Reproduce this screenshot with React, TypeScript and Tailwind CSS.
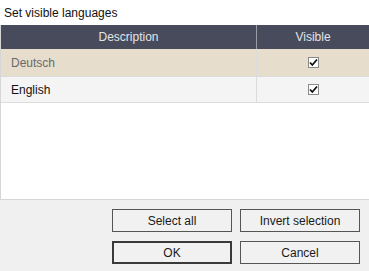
import React from 'react';

const Check: React.FC = () => (
  <div className="w-[11px] h-[11px] border border-[#8a8a8a] bg-white flex items-center justify-center">
    <svg width="9" height="9" viewBox="0 0 9 9">
      <path d="M1 4.5 L3.3 7 L8 1.5" fill="none" stroke="#111" strokeWidth="1.8" />
    </svg>
  </div>
);

const Btn: React.FC<{ label: string; primary?: boolean }> = ({ label, primary }) => (
  <button
    className={
      'w-[120px] h-[23px] bg-[#f1f1f1] text-[12px] text-[#1a1a1a] flex items-center justify-center ' +
      (primary ? 'border-2 border-[#3a3a3a]' : 'border border-[#555555]')
    }
  >
    {label}
  </button>
);

const App: React.FC = () => {
  const rows = [
    { name: 'Deutsch', bg: 'bg-[#e6ddcd]', text: 'text-[#6a6a6a]', h: 'h-[28px]' },
    { name: 'English', bg: 'bg-[#f4f4f4]', text: 'text-[#111]', h: 'h-[26px]' },
  ];

  return (
    <div className="w-[369px] h-[271px] bg-white flex flex-col font-['Liberation_Sans',Arial,sans-serif] text-[12px]">
      <div className="h-[25px] pl-[4px] pt-[4px] text-[#111]">Set visible languages</div>

      <div className="h-[175px] flex flex-col border-l border-b border-[#d6d6d6] bg-white">
        <div className="h-[24px] flex bg-[#474b5b] text-[#e4e4e8]">
          <div className="w-[256px] flex items-center justify-center border-r border-[#9a9ca6]">Description</div>
          <div className="flex-1 flex items-center justify-center">Visible</div>
        </div>
        {rows.map((r) => (
          <div key={r.name} className={`${r.h} flex border-b border-[#dcdcdc] ${r.bg}`}>
            <div className={`w-[256px] flex items-center pl-[10px] border-r border-[#dcdcdc] ${r.text}`}>{r.name}</div>
            <div className="flex-1 flex items-center justify-center">
              <Check />
            </div>
          </div>
        ))}
      </div>

      <div className="flex-1 bg-[#f0f0f0] flex justify-end pr-[9px] pt-[9px]">
        <div className="grid grid-cols-2 gap-x-[8px] gap-y-[9px] content-start">
          <Btn label="Select all" />
          <Btn label="Invert selection" />
          <Btn label="OK" primary />
          <Btn label="Cancel" />
        </div>
      </div>
    </div>
  );
};

export default App;
